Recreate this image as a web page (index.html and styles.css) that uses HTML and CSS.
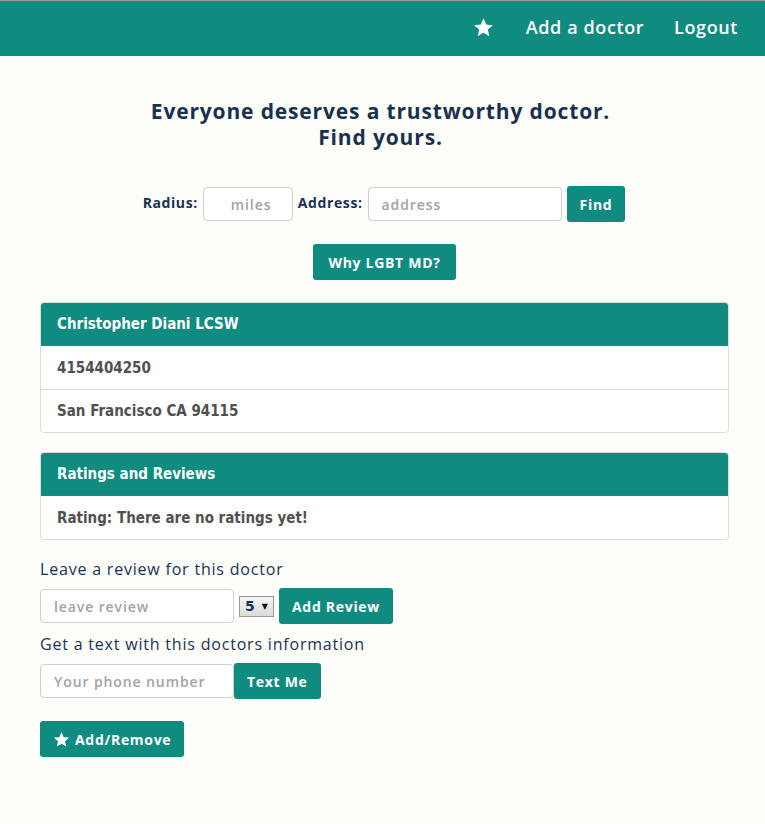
FILE: index.html
```html
<!DOCTYPE html>
<html>
<head>
<meta charset="utf-8">
<link rel="stylesheet" href="styles.css">
</head>
<body>
<nav class="navbar">
  <a class="nav-item nav-star" href="#"><svg viewBox="0 0 24 24" width="21" height="21"><path fill="#fff" d="M12 1.5l3.1 7.2 7.7.6-5.9 5.1 1.8 7.6L12 17.9l-6.7 4.1 1.8-7.6-5.9-5.1 7.7-.6z"/></svg></a>
  <a class="nav-item" href="#">Add a doctor</a>
  <a class="nav-item" href="#">Logout</a>
</nav>
<main class="container">
  <h1 class="headline">Everyone deserves a trustworthy doctor.<br>Find yours.</h1>
  <form class="search">
    <label class="lbl">Radius:</label>
    <input class="field field-sm" placeholder="miles">
    <label class="lbl">Address:</label>
    <input class="field field-md" placeholder="address">
    <button class="btn" type="button">Find</button>
  </form>
  <div class="center"><button class="btn btn-why" type="button">Why LGBT MD?</button></div>

  <section class="panel">
    <div class="panel-head">Christopher Diani LCSW</div>
    <div class="panel-row">4154404250</div>
    <div class="panel-row">San Francisco CA 94115</div>
  </section>

  <section class="panel">
    <div class="panel-head">Ratings and Reviews</div>
    <div class="panel-row">Rating: There are no ratings yet!</div>
  </section>

  <p class="prompt">Leave a review for this doctor</p>
  <div class="inline">
    <input class="field field-md" placeholder="leave review">
    <div class="sel"><span>5</span><span class="caret">▼</span></div>
    <button class="btn" type="button">Add Review</button>
  </div>
  <p class="prompt">Get a text with this doctors information</p>
  <div class="inline tight">
    <input class="field field-md" placeholder="Your phone number">
    <button class="btn" type="button">Text Me</button>
  </div>
  <button class="btn btn-fav" type="button"><svg viewBox="0 0 24 24" width="17" height="17"><path fill="#fff" d="M12 1.5l3.1 7.2 7.7.6-5.9 5.1 1.8 7.6L12 17.9l-6.7 4.1 1.8-7.6-5.9-5.1 7.7-.6z"/></svg>Add/Remove</button>
</main>
</body>
</html>
```
FILE: styles.css
```css
* { box-sizing: border-box; }
html, body { margin: 0; padding: 0; background: #fefefa; }
body { font-family: "Open Sans", "DejaVu Sans", sans-serif; color: #1a3153; }

.navbar {
  height: 56px;
  background: #108b7f;
  border-top: 1px solid #9a9a9a;
  display: flex;
  justify-content: flex-end;
  align-items: center;
  padding-right: 27px;
  padding-bottom: 3px;
  gap: 30px;
}
.nav-item {
  color: #fff;
  text-decoration: none;
  font-size: 18px;
  font-weight: 600;
  letter-spacing: 0.6px;
  display: flex;
  align-items: center;
}
.nav-star { margin-right: 2px; }

.container { padding: 0 36px 0 40px; }

.headline {
  margin: 42px 0 0;
  padding-right: 8px;
  text-align: center;
  font-size: 21px;
  line-height: 26px;
  font-weight: 700;
  letter-spacing: 0.85px;
  color: #19304f;
}

.search {
  margin-top: 36px;
  display: flex;
  justify-content: center;
  align-items: center;
  gap: 5px;
  padding-right: 1px;
}
.lbl {
  font-size: 14px;
  font-weight: 700;
  letter-spacing: 0.6px;
  color: #1a3153;
  margin-top: -3px;
}
.field {
  height: 34px;
  border: 1px solid #cfcfcf;
  border-radius: 4px;
  background: #fff;
  padding: 0 13px;
  font-family: inherit;
  font-size: 14px;
  font-weight: 600;
  letter-spacing: 0.9px;
  color: #555;
}
.field::placeholder { color: #a3a3a3; }
.field-sm { width: 90px; padding-left: 27px; }
.field-md { width: 194px; }

.btn {
  height: 36px;
  padding: 0 13px;
  background: #108b7f;
  color: #fff;
  border: 0;
  border-radius: 3px;
  font-family: inherit;
  font-size: 14px;
  font-weight: 700;
  letter-spacing: 0.7px;
  cursor: pointer;
}
.btn-why { padding: 0 15px; }
.center { display: flex; justify-content: center; margin-top: 22px; }

.panel {
  margin-top: 22px;
  width: 689px;
  background: #fff;
  border: 1px solid #dcdcdc;
  border-radius: 4px;
  overflow: hidden;
  font-family: "DejaVu Sans Condensed", "DejaVu Sans", sans-serif;
}
.panel + .panel { margin-top: 19px; }
.panel-head {
  height: 44px;
  margin: -1px -1px 0;
  background: #108b7f;
  color: #fff;
  font-size: 15px;
  font-weight: 700;
  display: flex;
  align-items: center;
  padding-left: 17px;
  border-bottom: 1px solid #2a7f90;
}
.panel-row {
  height: 43px;
  display: flex;
  align-items: center;
  padding-left: 16px;
  font-size: 15px;
  font-weight: 700;
  color: #505050;
}
.panel-row + .panel-row { border-top: 1px solid #dcdcdc; }

.prompt {
  margin: 18px 0 8px;
  font-size: 16px;
  letter-spacing: 0.8px;
  color: #1a3153;
}
.inline + .prompt { margin-top: 9px; }
.inline { display: flex; align-items: center; gap: 5px; }
.inline.tight { gap: 0; }
.sel {
  height: 21px;
  width: 35px;
  display: flex;
  align-items: center;
  justify-content: space-between;
  padding: 0 5px 0 5px;
  font-family: "DejaVu Sans", sans-serif;
  font-size: 14px;
  font-weight: 700;
  border: 1px solid #999;
  background: linear-gradient(#f6f6f6, #dadada);
  color: #1a3153;
}
.caret { font-size: 8px; color: #111; }
.btn-fav {
  margin-top: 22px;
  display: inline-flex;
  align-items: center;
  gap: 5px;
  padding: 0 13px;
}
```
